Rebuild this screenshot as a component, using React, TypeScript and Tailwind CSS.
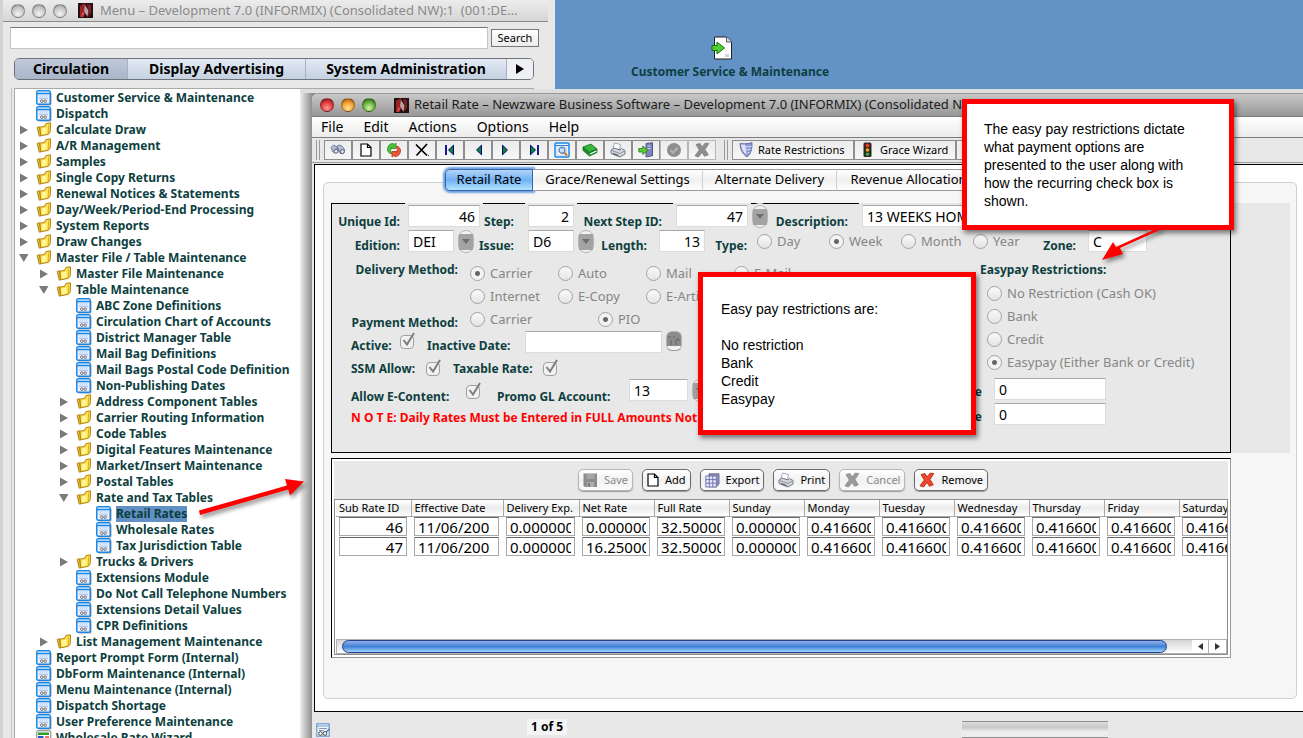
import React from "react";

type TreeNode = {
  label: string;
  depth: number;
  kind: "form" | "closed" | "open" | "wizard";
  selected?: boolean;
};

const treeNodes: TreeNode[] = [
  { label: "Customer Service & Maintenance", depth: 0, kind: "form" },
  { label: "Dispatch", depth: 0, kind: "form" },
  { label: "Calculate Draw", depth: 0, kind: "closed" },
  { label: "A/R Management", depth: 0, kind: "closed" },
  { label: "Samples", depth: 0, kind: "closed" },
  { label: "Single Copy Returns", depth: 0, kind: "closed" },
  { label: "Renewal Notices & Statements", depth: 0, kind: "closed" },
  { label: "Day/Week/Period-End Processing", depth: 0, kind: "closed" },
  { label: "System Reports", depth: 0, kind: "closed" },
  { label: "Draw Changes", depth: 0, kind: "closed" },
  { label: "Master File / Table Maintenance", depth: 0, kind: "open" },
  { label: "Master File Maintenance", depth: 1, kind: "closed" },
  { label: "Table Maintenance", depth: 1, kind: "open" },
  { label: "ABC Zone Definitions", depth: 2, kind: "form" },
  { label: "Circulation Chart of Accounts", depth: 2, kind: "form" },
  { label: "District Manager Table", depth: 2, kind: "form" },
  { label: "Mail Bag Definitions", depth: 2, kind: "form" },
  { label: "Mail Bags Postal Code Definition", depth: 2, kind: "form" },
  { label: "Non-Publishing Dates", depth: 2, kind: "form" },
  { label: "Address Component Tables", depth: 2, kind: "closed" },
  { label: "Carrier Routing Information", depth: 2, kind: "closed" },
  { label: "Code Tables", depth: 2, kind: "closed" },
  { label: "Digital Features Maintenance", depth: 2, kind: "closed" },
  { label: "Market/Insert Maintenance", depth: 2, kind: "closed" },
  { label: "Postal Tables", depth: 2, kind: "closed" },
  { label: "Rate and Tax Tables", depth: 2, kind: "open" },
  { label: "Retail Rates", depth: 3, kind: "form", selected: true },
  { label: "Wholesale Rates", depth: 3, kind: "form" },
  { label: "Tax Jurisdiction Table", depth: 3, kind: "form" },
  { label: "Trucks & Drivers", depth: 2, kind: "closed" },
  { label: "Extensions Module", depth: 2, kind: "form" },
  { label: "Do Not Call Telephone Numbers", depth: 2, kind: "form" },
  { label: "Extensions Detail Values", depth: 2, kind: "form" },
  { label: "CPR Definitions", depth: 2, kind: "form" },
  { label: "List Management Maintenance", depth: 1, kind: "closed" },
  { label: "Report Prompt Form (Internal)", depth: 0, kind: "form" },
  { label: "DbForm Maintenance (Internal)", depth: 0, kind: "form" },
  { label: "Menu Maintenance (Internal)", depth: 0, kind: "form" },
  { label: "Dispatch Shortage", depth: 0, kind: "form" },
  { label: "User Preference Maintenance", depth: 0, kind: "form" },
  { label: "Wholesale Rate Wizard", depth: 0, kind: "wizard" },
];

const indents = ["pl-1", "pl-6", "pl-11", "pl-16"];

const columns = [
  { name: "Sub Rate ID", width: "w-[75px]" },
  { name: "Effective Date", width: "w-[92px]" },
  { name: "Delivery Exp.", width: "w-[76px]" },
  { name: "Net Rate", width: "w-[75px]" },
  { name: "Full Rate", width: "w-[75px]" },
  { name: "Sunday", width: "w-[75px]" },
  { name: "Monday", width: "w-[75px]" },
  { name: "Tuesday", width: "w-[75px]" },
  { name: "Wednesday", width: "w-[75px]" },
  { name: "Thursday", width: "w-[75px]" },
  { name: "Friday", width: "w-[75px]" },
  { name: "Saturday", width: "w-[75px]" },
];

const day = "0.41660000";
const rates = [
  ["46", "11/06/200", "0.00000000", "0.00000000", "32.5000000", "0.00000000", day, day, day, day, day, day],
  ["47", "11/06/200", "0.00000000", "16.2500000", "32.5000000", "0.00000000", day, day, day, day, day, day],
];

/* ---------- icons ---------- */

function FormIcon() {
  return (
    <svg width="16" height="16" viewBox="0 0 16 16" className="shrink-0">
      <rect x="2" y="2" width="13.5" height="13.5" rx="1.5" fill="#9a9a9a" />
      <rect x="0.8" y="0.8" width="13.4" height="13.4" rx="1.5" fill="#eef0fb" stroke="#1a86e8" strokeWidth="1.5" />
      <path d="M1 3.6h13" stroke="#1a86e8" strokeWidth="1.4" />
      <path d="M1.5 2.2h12" stroke="#8fd0ff" strokeWidth="1" />
      <rect x="3" y="5" width="9" height="3.6" fill="#cfe3fb" />
      <path d="M3 8.8h9" stroke="#a9b4d8" strokeWidth="0.8" />
      <circle cx="5.8" cy="11.2" r="1.3" fill="none" stroke="#666" strokeWidth="0.9" />
      <circle cx="9.2" cy="11.2" r="1.3" fill="none" stroke="#666" strokeWidth="0.9" />
    </svg>
  );
}

function FolderIcon() {
  return (
    <svg width="16" height="16" viewBox="0 0 16 16" className="shrink-0">
      <path d="M1.2 5.4l2.2-.7 1.4 9.2-1.6.2z" fill="#f3c93a" stroke="#a87a0c" strokeWidth="0.9" />
      <path d="M4 5.200l4.800-.9 1.200-2.800 4.600-.7-.4 8.900-1.700 2.600-8 1.500z" fill="#ffe14d" stroke="#b0820e" strokeWidth="1" />
      <path d="M5.500 6.500l5-1 .1 5.500-4.500 1.500z" fill="#fff59a" />
      <path d="M12.600 2.500l-.2 8.500" stroke="#e3b226" strokeWidth="1" />
    </svg>
  );
}

function WizardIcon() {
  return (
    <svg width="16" height="16" viewBox="0 0 16 16" className="shrink-0">
      <rect x="0.8" y="0.8" width="14" height="14" rx="1" fill="#fff" stroke="#777" />
      <rect x="2" y="2.5" width="11" height="2.5" fill="#2aa12a" />
      <rect x="2" y="6" width="5.5" height="5" fill="#2558c9" />
      <path d="M9 7h4" stroke="#e33" strokeWidth="1.4" />
      <path d="M9 10h4" stroke="#e9b020" strokeWidth="1.4" />
    </svg>
  );
}

function AppLogo() {
  return (
    <svg width="15" height="15" viewBox="0 0 15 15" className="shrink-0">
      <rect width="15" height="15" fill="#241012" />
      <path d="M2 3l5-3 1 8-4 6H2z" fill="#9c2228" />
      <path d="M7 2l3.500 5.500L9.500 14 6 8z" fill="#b9a3a3" />
      <path d="M9 1l4 1v8l-3.500 4 1-6.500z" fill="#7c2125" />
      <path d="M4 9l3 1-2 4H3z" fill="#d8473f" />
    </svg>
  );
}

function BinocularsIcon() {
  return (
    <svg width="16" height="14" viewBox="0 0 16 14">
      <g stroke="#6a7490" strokeWidth="0.9" fill="#b4bdd4">
        <path d="M1 4.500L3.500 2l3 1.500 2 4.500-2.500 2-3-1z" />
        <path d="M7 3l2.500-1L12 3.200l2.800 3.600-1.500 3.400-3 .3z" />
        <circle cx="6" cy="8.200" r="2" fill="#dfe5f3" stroke="#4a5470" />
        <circle cx="12.400" cy="8.600" r="2" fill="#dfe5f3" stroke="#4a5470" />
      </g>
    </svg>
  );
}

function PageIcon() {
  return (
    <svg width="12" height="14" viewBox="0 0 12 14">
      <path d="M1 1h6.5L11 4.5V13H1z" fill="#fff" stroke="#000" strokeWidth="1.2" />
      <path d="M7.5 1v3.5H11" fill="none" stroke="#000" strokeWidth="1.2" />
    </svg>
  );
}

function RefreshIcon() {
  return (
    <svg width="16" height="16" viewBox="0 0 16 16">
      <path d="M5 12C1 10.500.5 6 3 3.200 4.500 1.500 7 1 8.500 2.200L10 1v5.500H4.800L6.300 5C4.500 5.500 4 9 5.800 11z" fill="#4cc23c" stroke="#2c8d22" strokeWidth="0.8" />
      <path d="M11 4c4 1.500 4.500 6 2 8.800-1.500 1.700-4 2.200-5.500 1L6 15V9.500h5.200L9.700 11C11.500 10.500 12 7 10.200 5z" fill="#f0593a" stroke="#b8341a" strokeWidth="0.8" />
    </svg>
  );
}

function DeleteIcon() {
  return (
    <svg width="14" height="14" viewBox="0 0 14 14">
      <path d="M1 1.500l11 11M12 1L1.500 12.500" stroke="#000" strokeWidth="1.700" />
      <path d="M13 12.500h.8" stroke="#000" />
    </svg>
  );
}

function NavIcon({ dir, bar }: { dir: "left" | "right"; bar?: boolean }) {
  return (
    <svg width="12" height="12" viewBox="0 0 12 12" className={dir === "right" ? "rotate-180" : ""}>
      {bar && <path d="M2 1v10" stroke="#00008b" strokeWidth="1.800" />}
      <path d="M9.500 1.200v9.600L4.500 6z" fill="#0a8a1e" stroke="#00008b" strokeWidth="1" />
    </svg>
  );
}

function FindIcon() {
  return (
    <svg width="16" height="16" viewBox="0 0 16 16">
      <rect x="1" y="1" width="14" height="14" rx="1" fill="#eef4fd" stroke="#1e86e6" strokeWidth="1.500" />
      <path d="M1 3.500h14" stroke="#1e86e6" />
      <rect x="3" y="5" width="9.500" height="8" fill="#fff" stroke="#b9c8de" strokeWidth="0.7" />
      <circle cx="8" cy="8.300" r="3" fill="#bfe0fb" stroke="#5b7ba8" strokeWidth="1.200" />
      <path d="M10.200 10.500l3 3" stroke="#c87a28" strokeWidth="1.800" />
    </svg>
  );
}

function BookIcon() {
  return (
    <svg width="16" height="14" viewBox="0 0 16 14">
      <path d="M1 4l8-3 6 5-7.500 3.500z" fill="#35b83c" stroke="#136d1a" strokeWidth="0.8" />
      <path d="M1 4v3.500l6.500 5.500 7.500-3.500V6L7.500 9.500z" fill="#1e8f28" stroke="#136d1a" strokeWidth="0.8" />
      <path d="M8 11l6.500-3" stroke="#fff" strokeWidth="1.200" />
    </svg>
  );
}

function PrinterIcon() {
  return (
    <svg width="16" height="16" viewBox="0 0 16 16">
      <path d="M3 6.500L4.500 1l6 1.500L9.500 8z" fill="#fdfdff" stroke="#8a93a8" strokeWidth="0.8" />
      <path d="M1 8l3-2 6 2 1.500-1.500L15 8.500v3.500l-5 3-9-3.500z" fill="#d3d6dc" stroke="#6a6f7c" strokeWidth="0.9" />
      <path d="M1.500 8.500l8.500 3 4.500-2.500" fill="none" stroke="#8f95a0" />
      <path d="M3 11.500l5.500 2" stroke="#555" strokeWidth="1.200" />
    </svg>
  );
}

function ExitIcon() {
  return (
    <svg width="16" height="16" viewBox="0 0 16 16">
      <path d="M8 1.500l6.500-.8v13L8 15z" fill="#7d85b8" stroke="#454c7c" strokeWidth="0.9" />
      <path d="M9.500 4h3M9.500 6.500h3" stroke="#c9cef0" />
      <path d="M.8 6.500h4V4l5 4.300-5 4.200V10h-4z" fill="#58cf38" stroke="#1c7d10" strokeWidth="0.8" />
    </svg>
  );
}

function CheckCircleIcon() {
  return (
    <svg width="16" height="16" viewBox="0 0 16 16">
      <circle cx="8" cy="8" r="7" fill="#8e8e8e" />
      <path d="M4.500 8.200l2.600 2.600 4.600-5.300" fill="none" stroke="#b4b4b4" strokeWidth="2" />
    </svg>
  );
}

function CrossIcon({ color, edge }: { color: string; edge: string }) {
  return (
    <svg width="16" height="16" viewBox="0 0 16 16">
      <path
        d="M2 2.500L6 1.500 8 5l3-3.800 3.800.3-3.800 6 3.300 5.300-3.800 1.500L8 10.500 4.500 15 1 13.800 5.300 8z"
        fill={color}
        stroke={edge}
        strokeWidth="0.8"
        strokeLinejoin="round"
      />
    </svg>
  );
}

function ShieldIcon() {
  return (
    <svg width="14" height="16" viewBox="0 0 14 16">
      <path d="M1 1.500c4 .6 8 .4 12-.8 0 7-1 11-5 14.300C3.500 12 1.500 8 1 1.500z" fill="#8f99d2" stroke="#5f679f" strokeWidth="0.9" />
      <path d="M2 2.500l4.500.2.700 10C4 10 2.500 7 2 2.500z" fill="#dfe3fa" />
      <path d="M7 5l5.500-.6M7 8l4.500-.6M7.500 11l3-.6" stroke="#d5daf5" />
    </svg>
  );
}

function TrafficIcon() {
  return (
    <svg width="9" height="16" viewBox="0 0 9 16">
      <rect x="0.500" y="0.500" width="8" height="14.500" rx="1.500" fill="#2c2620" />
      <circle cx="4.500" cy="3.500" r="2" fill="#e8391c" />
      <circle cx="4.500" cy="8" r="1.800" fill="#e6b21e" />
      <circle cx="4.500" cy="12.200" r="1.800" fill="#2fb53a" />
    </svg>
  );
}

function DiskIcon() {
  return (
    <svg width="15" height="15" viewBox="0 0 15 15">
      <path d="M0.500.500h13.500v13.500H2L.500 12.500z" fill="#8c8c8c" />
      <rect x="3.500" y="1" width="8" height="5" fill="#a5a5a5" />
      <rect x="4" y="9" width="7" height="5" fill="#adadad" />
      <rect x="5" y="10" width="2" height="3.500" fill="#777" />
    </svg>
  );
}

function GridIcon() {
  return (
    <svg width="15" height="15" viewBox="0 0 15 15">
      <path d="M4 .8h10v10l-2.500 3H4z" fill="#8f92b8" stroke="#585c86" strokeWidth="0.8" />
      <rect x="0.800" y="3" width="10.500" height="11" fill="#e6e7ff" stroke="#6a6ea8" strokeWidth="0.9" />
      <path d="M1 6.600h10M1 10.200h10M4.300 3v11M7.800 3v11" stroke="#6a6ea8" strokeWidth="0.9" />
    </svg>
  );
}

function DesktopIcon() {
  return (
    <svg width="22" height="24" viewBox="0 0 22 24">
      <path d="M3.500 1h12l5 5v17h-17z" fill="#fff" stroke="#222" strokeWidth="1" />
      <path d="M15.500 1v5h5" fill="#ddd" stroke="#444" strokeWidth="0.9" />
      <path d="M14 18h4v3h-4z" fill="#c9d4e8" />
      <path d="M1 9.500h5V6l7.500 6L6 18v-3.500H1z" fill="#4fca2f" stroke="#17700c" strokeWidth="1" />
    </svg>
  );
}

function StatusIcon() {
  return (
    <svg width="15" height="15" viewBox="0 0 15 15">
      <rect x="0.800" y="0.800" width="12.400" height="12.400" fill="#f2f5fc" stroke="#6a9bd0" strokeWidth="1.200" />
      <path d="M1 3h12" stroke="#6a9bd0" />
      <path d="M3 5.500h8M3 7.500h5" stroke="#8a96b4" />
      <circle cx="4.500" cy="10.500" r="1.800" fill="#fff" stroke="#444" />
      <circle cx="9" cy="10.500" r="1.800" fill="#fff" stroke="#444" />
      <path d="M10 9l3.500-3" stroke="#3d6fae" strokeWidth="1.200" />
    </svg>
  );
}

/* ---------- controls ---------- */

const lights = {
  gray: "bg-[radial-gradient(circle_at_50%_75%,#f4f4f4,#c4c4c4_60%,#8c8c8c)]",
  red: "bg-[radial-gradient(circle_at_50%_75%,#ff9a8f,#e0363c_55%,#6d1418)]",
  yellow: "bg-[radial-gradient(circle_at_50%_75%,#ffe89a,#f0992c_55%,#7d4a10)]",
  green: "bg-[radial-gradient(circle_at_50%_75%,#d2f5a0,#64ad3c_55%,#22501a)]",
};

function Light({ tone, name }: { tone: keyof typeof lights; name: string }) {
  return (
    <button
      aria-label={name}
      className={`size-[14px] shrink-0 rounded-full border border-black/30 ${lights[tone]}`}
    ></button>
  );
}

function Label({ htmlFor, className = "", children }: { htmlFor?: string; className?: string; children: React.ReactNode }) {
  return (
    <label
      htmlFor={htmlFor}
      className={`shrink-0 self-end whitespace-nowrap text-xs leading-4 font-bold text-[#0e3f3f] ${className}`}
    >
      {children}
    </label>
  );
}

function Field({ id, value, className = "" }: { id: string; value: string; className?: string }) {
  return (
    <input
      id={id}
      defaultValue={value}
      className={`h-[22px] shrink-0 self-start border border-[#dcdcdc] border-t-[#a8a8a8] bg-white px-1 text-sm leading-5 text-black outline-none ${className}`}
    />
  );
}

function LookupButton({ name, className = "" }: { name: string; className?: string }) {
  return (
    <button
      type="button"
      aria-label={name}
      className={`flex h-[23px] w-4 shrink-0 items-center self-start rounded-lg border border-[#b5b5b5] bg-[#f2f2f2] ${className}`}
    >
      <span className="flex h-4 w-full items-center justify-center bg-[#a3a3a3]">
        <svg width="8" height="5" viewBox="0 0 8 5">
          <path d="M0 0h8L4 5z" fill="#6e6e6e" />
        </svg>
      </span>
    </button>
  );
}

function Radio({ group, text, checked, className = "" }: { group: string; text: string; checked?: boolean; className?: string }) {
  return (
    <label className={`flex h-[23px] shrink-0 items-center gap-[5px] text-[13px] whitespace-nowrap text-[#868686] ${className}`}>
      <input
        type="radio"
        name={group}
        defaultChecked={checked}
        disabled
        className="size-[15px] shrink-0 appearance-none rounded-full border border-[#a2a2a2] bg-[#f1f1f1] bg-linear-to-b from-[#fafafa] to-[#e4e4e4] checked:bg-[radial-gradient(circle,#666_2px,#f3f3f3_3px)]"
      />
      {text}
    </label>
  );
}

function Check({ id, className = "" }: { id: string; className?: string }) {
  return (
    <span className={`relative size-[15px] shrink-0 ${className}`}>
      <input
        id={id}
        type="checkbox"
        defaultChecked
        disabled
        className="block size-[14px] appearance-none rounded-sm border border-[#a0a0a0] bg-[#f1f1f1]"
      />
      <svg width="14" height="15" viewBox="0 0 14 15" className="absolute -top-[3px] left-px">
        <path d="M2.500 8l3.500 4.500L13 1" fill="none" stroke="#7d7d7d" strokeWidth="2" />
      </svg>
    </span>
  );
}

function ToolButton({ name, disabled, children }: { name: string; disabled?: boolean; children: React.ReactNode }) {
  return (
    <button
      aria-label={name}
      disabled={disabled}
      className="flex h-5 w-7 shrink-0 items-center justify-center border border-[#8e8e8e] bg-linear-to-b from-[#ececec] to-[#f6f6f6] disabled:border-[#b8b8b8]"
    >
      {children}
    </button>
  );
}

function ActionButton({ text, disabled, children }: { text: string; disabled?: boolean; children: React.ReactNode }) {
  return (
    <button
      type="button"
      disabled={disabled}
      className="flex h-[22px] items-center gap-1.5 rounded-[5px] border border-[#6b6b6b] bg-linear-to-b from-white via-[#f1f1f1] to-[#fafafa] px-1 text-[11px] text-black shadow-[0_1px_1px_#999] disabled:border-[#b5b5b5] disabled:text-[#8a8a8a]"
    >
      {children}
      {text}
    </button>
  );
}

function Handle() {
  return <span className="h-5 w-1 shrink-0 border-x border-[#9a9a9a]"></span>;
}

/* ---------- windows ---------- */

function TreeRow({ node }: { node: TreeNode }) {
  const folder = node.kind === "closed" || node.kind === "open";
  return (
    <li className={`flex h-4 items-center whitespace-nowrap ${indents[node.depth]}`}>
      <span className="flex w-[17px] shrink-0 items-center">
        {node.kind === "closed" && (
          <svg width="9" height="10" viewBox="0 0 9 10">
            <path d="M1 .500v9L9 5z" fill="#7b7b7b" />
          </svg>
        )}
        {node.kind === "open" && (
          <svg width="10" height="8" viewBox="0 0 10 8">
            <path d="M0 0h9.500L4.800 8z" fill="#7b7b7b" />
          </svg>
        )}
      </span>
      {node.kind === "form" && <FormIcon />}
      {node.kind === "wizard" && <WizardIcon />}
      {folder && <FolderIcon />}
      <span
        className={`ml-1 text-xs leading-4 font-bold text-[#0e3f3f] ${node.selected ? "bg-[#6290c5]" : ""}`}
      >
        {node.label}
      </span>
    </li>
  );
}

function MenuWindow() {
  return (
    <section className="absolute inset-y-0 left-0 flex w-[555px] flex-col overflow-hidden border-l-[3px] border-[#d2d2d2] bg-[#e8e8e8] pr-[7px]">
      <header className="flex h-[22px] shrink-0 items-center gap-[7px] border-b border-[#8b8b8b] bg-linear-to-b from-[#ececec] to-[#d6d6d6] pl-2">
        <Light tone="gray" name="Close menu" />
        <Light tone="gray" name="Minimize menu" />
        <Light tone="gray" name="Zoom menu" />
        <span className="ml-1">
          <AppLogo />
        </span>
        <h1 className="min-w-0 flex-1 truncate text-[13px] whitespace-pre text-[#8a8a8a]">
          Menu – Development 7.0 (INFORMIX) (Consolidated NW):1  (001:DE…
        </h1>
      </header>

      <div className="flex shrink-0 items-center gap-[3px] pt-[5px] pr-[9px] pl-[7px]">
        <input
          aria-label="Search menu"
          className="h-[22px] min-w-0 flex-1 border border-[#c4c4c4] border-t-[#777] bg-white px-1 text-[13px] outline-none"
        />
        <button className="h-[18px] w-12 border border-[#777] bg-linear-to-b from-white to-[#ececec] text-[11px] leading-4 text-black">
          Search
        </button>
      </div>

      <nav className="mt-[9px] mr-3.5 ml-[11px] flex h-[22px] shrink-0 overflow-hidden rounded-[5px] border border-[#6f747c] bg-linear-to-b from-[#e3eaf4] to-[#c5d1e1] text-sm font-bold text-black">
        <button className="w-[113px] border-r border-[#a6b0bf] bg-linear-to-b from-[#bfc9d8] to-[#a9b6c8]">Circulation</button>
        <button className="w-[178px] border-r border-[#a6b0bf]">Display Advertising</button>
        <button className="w-[201px] border-r border-[#a6b0bf]">System Administration</button>
        <button aria-label="More tabs" className="flex flex-1 items-center justify-center bg-[#eef0f3]">
          <svg width="8" height="10" viewBox="0 0 8 10">
            <path d="M0 0v10l8-5z" fill="#000" />
          </svg>
        </button>
      </nav>

      <div className="mt-2 mr-3.5 ml-2 flex min-h-0 flex-1 border-l border-[#c4c4c4] pl-[2px]">
        <ul className="min-w-0 flex-1 overflow-hidden border-t border-l border-[#a9a9a9] bg-white pt-px">
          {treeNodes.map((node) => (
            <TreeRow key={node.label} node={node} />
          ))}
        </ul>
      </div>
    </section>
  );
}

function RateForm() {
  return (
    <form className="mr-[59px] border border-black bg-[#e8e8e8]">
      {/* the first row's fields interrupt the frame's top line */}
      <div className="-mt-px flex h-[27px] pt-0.5">
        <Label htmlFor="uniqueId" className="w-[68px] text-right">Unique Id:</Label>
        <Field id="uniqueId" value="46" className="ml-2 w-[72px] text-right shadow-[0_1px_0_3px_#e8e8e8]" />
        <Label htmlFor="step" className="w-[34px] text-right">Step:</Label>
        <Field id="step" value="2" className="ml-3.5 w-[46px] text-right shadow-[0_1px_0_3px_#e8e8e8]" />
        <Label htmlFor="nextStep" className="w-[88px] text-right">Next Step ID:</Label>
        <Field id="nextStep" value="47" className="ml-3.5 w-[72px] text-right shadow-[0_1px_0_3px_#e8e8e8]" />
        <LookupButton name="Look up next step" className="ml-1 shadow-[0_1px_0_3px_#e8e8e8]" />
        <Label htmlFor="description" className="w-[80px] text-right">Description:</Label>
        <Field id="description" value="13 WEEKS HOME DELIVERY" className="ml-3.5 w-[240px] shadow-[0_1px_0_3px_#e8e8e8]" />
      </div>

      <div className="flex h-6">
        <Label htmlFor="edition" className="w-[68px] text-right">Edition:</Label>
        <Field id="edition" value="DEI" className="ml-2 w-[46px]" />
        <LookupButton name="Look up edition" className="ml-1" />
        <Label htmlFor="issue" className="w-10 text-right">Issue:</Label>
        <Field id="issue" value="D6" className="ml-3.5 w-[46px]" />
        <LookupButton name="Look up issue" className="ml-1" />
        <Label htmlFor="length" className="w-[53px] text-right">Length:</Label>
        <Field id="length" value="13" className="ml-3 w-[46px] text-right" />
        <Label className="w-[42px] text-right">Type:</Label>
        <Radio group="type" text="Day" className="ml-2.5 w-[72px]" />
        <Radio group="type" text="Week" checked className="w-[72px]" />
        <Radio group="type" text="Month" className="w-[72px]" />
        <Radio group="type" text="Year" className="w-[57px]" />
        <Label htmlFor="zone" className="w-[46px] text-right">Zone:</Label>
        <Field id="zone" value="C" className="ml-3 w-[59px]" />
      </div>

      <div className="flex pt-2 pb-[26px]">
        <div className="w-[648px] shrink-0 pl-[19px]">
          <div className="flex">
            <span className="w-[107px] shrink-0 text-right text-xs leading-4 font-bold text-[#0e3f3f]">Delivery Method:</span>
            <div className="ml-3 grid grid-cols-[88px_88px_88px_88px]">
              <Radio group="delivery" text="Carrier" checked />
              <Radio group="delivery" text="Auto" />
              <Radio group="delivery" text="Mail" />
              <Radio group="delivery" text="E-Mail" />
              <Radio group="delivery" text="Internet" />
              <Radio group="delivery" text="E-Copy" />
              <Radio group="delivery" text="E-Article" />
            </div>
          </div>
          <div className="flex">
            <Label className="w-[107px] text-right">Payment Method:</Label>
            <Radio group="payment" text="Carrier" className="ml-3 w-32" />
            <Radio group="payment" text="PIO" checked />
          </div>
          <div className="flex h-[23px]">
            <Label htmlFor="active" className="w-[41px]">Active:</Label>
            <Check id="active" className="ml-2 self-center" />
            <Label htmlFor="inactiveDate" className="ml-3 w-[84px]">Inactive Date:</Label>
            <Field id="inactiveDate" value="" className="ml-3.5 w-[137px]" />
            <button
              type="button"
              aria-label="Pick inactive date"
              className="ml-1 h-5 w-4 shrink-0 rounded-md border border-[#b5b5b5] border-b-[#999] bg-linear-to-b from-[#8c8c8c] from-75% to-[#f2f2f2] to-80%"
            >
              <svg width="14" height="13" viewBox="0 0 14 13">
                <path d="M1 2h3M6 2h2M4 5v5M9 10V6l2-2 1.500 2" fill="none" stroke="#696969" strokeWidth="1.200" />
              </svg>
            </button>
          </div>
          <div className="flex h-[25px] pb-0.5">
            <Label htmlFor="ssm" className="w-[67px]">SSM Allow:</Label>
            <Check id="ssm" className="ml-2 self-end" />
            <Label htmlFor="taxable" className="ml-3 w-[82px]">Taxable Rate:</Label>
            <Check id="taxable" className="ml-2 self-end" />
          </div>
          <div className="flex h-[26px]">
            <Label htmlFor="econtent" className="w-[107px]">Allow E-Content:</Label>
            <Check id="econtent" className="ml-2 self-center" />
            <Label htmlFor="promo" className="ml-4 w-[118px]">Promo GL Account:</Label>
            <Field id="promo" value="13" className="ml-3.5 w-[59px]" />
            <LookupButton name="Look up promo account" className="ml-1" />
          </div>
          <p className="mt-[5px] text-xs leading-4 font-bold whitespace-nowrap text-[#ff0000]">
            N O T E: Daily Rates Must be Entered in FULL Amounts Not
          </p>
        </div>

        <div className="min-w-0 flex-1">
          <p className="mb-1 text-xs leading-4 font-bold text-[#0e3f3f]">Easypay Restrictions:</p>
          <div className="flex flex-col pl-[7px]">
            <Radio group="easypay" text="No Restriction (Cash OK)" />
            <Radio group="easypay" text="Bank" />
            <Radio group="easypay" text="Credit" />
            <Radio group="easypay" text="Easypay (Either Bank or Credit)" checked />
          </div>
          <div className="-ml-10 flex flex-col gap-[3px] pt-1">
            <div className="flex">
              <Label htmlFor="rateOne" className="w-[42px] text-right">Rate</Label>
              <Field id="rateOne" value="0" className="ml-3 w-28" />
            </div>
            <div className="flex">
              <Label htmlFor="rateTwo" className="w-[42px] text-right">Rate</Label>
              <Field id="rateTwo" value="0" className="ml-3 w-28" />
            </div>
          </div>
        </div>
      </div>
    </form>
  );
}

function SubRates() {
  return (
    <div className="mt-[5px] mr-[59px] flex h-[200px] flex-col border border-[#9a9a9a] border-t-black border-l-black bg-white p-0.5">
      <div className="flex h-[38px] shrink-0 items-center justify-center gap-[9px] bg-[#e8e8e8] pl-1">
        <ActionButton text="Save" disabled><DiskIcon /></ActionButton>
        <ActionButton text="Add"><PageIcon /></ActionButton>
        <ActionButton text="Export"><GridIcon /></ActionButton>
        <ActionButton text="Print"><PrinterIcon /></ActionButton>
        <ActionButton text="Cancel" disabled><CrossIcon color="#9a9a9a" edge="#888" /></ActionButton>
        <ActionButton text="Remove"><CrossIcon color="#f0472a" edge="#a8200c" /></ActionButton>
      </div>

      <div className="flex min-h-0 flex-1 flex-col border border-[#8e8e8e] pl-px">
        <div className="min-h-0 flex-1 overflow-hidden">
          <table className="w-[918px] table-fixed border-collapse">
            <thead>
              <tr>
                {columns.map((col) => (
                  <th
                    key={col.name}
                    className={`h-4 border-r border-b border-[#a8a8a8] bg-linear-to-b from-white via-[#ececec] to-white p-0 pl-[3px] text-left text-[11px] leading-4 font-normal whitespace-nowrap text-black ${col.width}`}
                  >
                    {col.name}
                  </th>
                ))}
              </tr>
            </thead>
            <tbody>
              {rates.map((row) => (
                <tr key={row[0]}>
                  {row.map((value, i) => (
                    <td key={columns[i].name} className="h-5 p-0 pr-1 pl-[3px]">
                      <input
                        aria-label={`${columns[i].name} ${row[0]}`}
                        defaultValue={value}
                        className={`block h-[19px] w-full border border-[#a8a8a8] border-t-[#666] bg-white px-[3px] text-[15px] leading-4 text-black outline-none ${i === 0 ? "text-right" : ""}`}
                      />
                    </td>
                  ))}
                </tr>
              ))}
            </tbody>
          </table>
        </div>
        <div className="flex h-[15px] shrink-0 items-stretch border border-[#b0b0b0] bg-linear-to-b from-[#d4d4d4] to-white pl-[5px]">
          <div className="flex-1">
            <div className="h-full w-[97%] rounded-full border border-[#24408f] bg-linear-to-b from-[#8fb0e4] via-[#3f80d8] to-[#9fd6fa]"></div>
          </div>
          <button aria-label="Scroll left" className="flex w-[17px] items-center justify-center border-r border-[#b0b0b0] bg-white">
            <svg width="5" height="7" viewBox="0 0 5 7"><path d="M5 0v7L0 3.500z" fill="#333" /></svg>
          </button>
          <button aria-label="Scroll right" className="flex w-[17px] items-center justify-center bg-white">
            <svg width="5" height="7" viewBox="0 0 5 7"><path d="M0 0v7l5-3.500z" fill="#333" /></svg>
          </button>
        </div>
      </div>
    </div>
  );
}

function RetailWindow() {
  return (
    <section className="absolute top-[89px] right-0 bottom-0 left-[300px] flex flex-col bg-linear-to-r from-[#efefef] to-[#8f8f8f] to-[12px]">
      <div className="h-1 shrink-0 bg-[#dedede]"></div>
      <div className="ml-3 flex min-h-0 flex-1 flex-col rounded-tl-md border-t border-[#999] bg-[#e8e8e8]">
        <header className="flex h-[22px] shrink-0 items-center gap-[7px] rounded-tl-md bg-linear-to-b from-[#c9c9c9] to-[#979797] pl-2">
          <Light tone="red" name="Close" />
          <Light tone="yellow" name="Minimize" />
          <Light tone="green" name="Zoom" />
          <span className="ml-[11px]">
            <AppLogo />
          </span>
          <h2 className="-ml-0.5 text-[13px] whitespace-nowrap text-[#1c1c1c]">
            Retail Rate – Newzware Business Software – Development 7.0 (INFORMIX) (Consolidated NW):1
          </h2>
        </header>

        <nav className="flex h-[22px] shrink-0 items-center gap-5 border-y border-[#7d7d7d] bg-linear-to-b from-white to-[#ececec] pl-[9px] text-sm text-black">
          <button>File</button>
          <button>Edit</button>
          <button>Actions</button>
          <button>Options</button>
          <button>Help</button>
        </nav>

        <div className="flex h-[25px] shrink-0 items-center border-b border-[#9a9a9a] pl-1">
          <Handle />
          <div className="ml-1 flex">
            <ToolButton name="Find"><BinocularsIcon /></ToolButton>
            <ToolButton name="New"><PageIcon /></ToolButton>
            <ToolButton name="Refresh"><RefreshIcon /></ToolButton>
            <ToolButton name="Delete"><DeleteIcon /></ToolButton>
            <ToolButton name="First"><NavIcon dir="left" bar /></ToolButton>
            <ToolButton name="Previous"><NavIcon dir="left" /></ToolButton>
            <ToolButton name="Next"><NavIcon dir="right" /></ToolButton>
            <ToolButton name="Last"><NavIcon dir="right" bar /></ToolButton>
            <ToolButton name="Browse"><FindIcon /></ToolButton>
            <ToolButton name="Manual"><BookIcon /></ToolButton>
            <ToolButton name="Print form"><PrinterIcon /></ToolButton>
            <ToolButton name="Exit"><ExitIcon /></ToolButton>
            <ToolButton name="Accept" disabled><CheckCircleIcon /></ToolButton>
            <ToolButton name="Discard" disabled><CrossIcon color="#8e8e8e" edge="#7c7c7c" /></ToolButton>
          </div>
          <span className="ml-2 flex">
            <Handle />
          </span>
          <button className="ml-1 flex h-5 w-[122px] shrink-0 items-center gap-[5px] border border-[#8e8e8e] bg-linear-to-b from-[#ececec] to-[#f6f6f6] pl-1.5 text-[11px] whitespace-nowrap text-black">
            <ShieldIcon />
            Rate Restrictions
          </button>
          <button className="flex h-5 w-[102px] shrink-0 items-center gap-2 border border-[#8e8e8e] bg-linear-to-b from-[#ececec] to-[#f6f6f6] pl-2 text-[11px] whitespace-nowrap text-black">
            <TrafficIcon />
            Grace Wizard
          </button>
          <button aria-label="More tools" className="h-5 w-[102px] border border-[#8e8e8e] bg-[#f1f1f1]"></button>
        </div>

        <main className="mt-px ml-0.5 flex min-h-0 flex-1 flex-col border-y border-l border-black bg-white pr-1.5 pl-2">
          <div className="relative mt-1 ml-[122px] flex h-[22px] shrink-0 text-[13px] text-black">
            <button className="h-[22px] w-[88px] rounded-l-[5px] border border-[#3a62a8] bg-linear-to-b from-[#b4d4f8] via-[#6fb0f4] to-[#b5e4ff] shadow-[0_0_2px_2px_#6ba0de]">
              Retail Rate
            </button>
            <button className="w-[170px] border-y border-r border-[#9a9a9a] border-r-[#cfcfcf] bg-linear-to-b from-white via-[#efefef] to-white">
              Grace/Renewal Settings
            </button>
            <button className="w-[134px] border-y border-r border-[#9a9a9a] border-r-[#cfcfcf] bg-linear-to-b from-white via-[#efefef] to-white">
              Alternate Delivery
            </button>
            <button className="w-[144px] border-y border-r border-[#9a9a9a] border-r-[#cfcfcf] bg-linear-to-b from-white via-[#efefef] to-white">
              Revenue Allocation
            </button>
          </div>
          <div className="-mt-[9px] mb-3 min-h-0 flex-1 rounded-[5px] border border-[#cfcfcf] bg-[#f6f6f6] pt-5 pr-1.5 pl-[7px]">
            <div className="bg-[#e8e8e8]">
              <RateForm />
            </div>
            <SubRates />
          </div>
        </main>

        <footer className="flex h-[26px] shrink-0 items-end">
          <span className="ml-1">
            <StatusIcon />
          </span>
          <span className="mb-[3px] ml-[196px] bg-[#f4f4f4] px-1 text-xs leading-4 font-bold text-black">1 of 5</span>
          <span className="mr-[195px] ml-auto h-[17px] w-[146px] border-y border-[#8e8e8e] bg-linear-to-b from-[#dedede] via-[#c8c8c8] via-35% to-[#ededed] to-65%"></span>
        </footer>
      </div>
    </section>
  );
}

function Callout({ className, children }: { className: string; children: React.ReactNode }) {
  return (
    <aside
      className={`absolute border-[5px] border-[#ff0000] bg-white font-['Liberation_Sans',Arial,sans-serif] text-sm leading-[18px] text-black shadow-[2px_3px_5px_rgba(0,0,0,0.5)] ${className}`}
    >
      {children}
    </aside>
  );
}

export default function App() {
  return (
    <div className="relative h-screen min-h-[738px] overflow-hidden bg-[#6392c7] font-['Noto_Sans','Open_Sans',sans-serif]">
      <a href="#customer-service" className="absolute top-9 left-[631px] flex flex-col items-center text-xs leading-4 font-bold text-[#0e3f3f]">
        <span className="mr-4">
          <DesktopIcon />
        </span>
        <span className="mt-1">Customer Service &amp; Maintenance</span>
      </a>

      <MenuWindow />
      <RetailWindow />

      <Callout className="top-[272px] left-[698px] h-[163px] w-[278px] pt-[23px] pl-[18px]">
        <p>Easy pay restrictions are:</p>
        <ul className="mt-[18px]">
          <li>No restriction</li>
          <li>Bank</li>
          <li>Credit</li>
          <li>Easypay</li>
        </ul>
      </Callout>
      <Callout className="top-[99px] left-[962px] h-[131px] w-[272px] pt-4 pr-8 pl-[17px]">
        The easy pay restrictions dictate what payment options are presented to the user along with how the recurring check box is shown.
      </Callout>

      <svg width="120" height="50" viewBox="0 0 120 50" className="absolute top-[472px] left-[194px] drop-shadow-[2px_3px_2px_rgba(0,0,0,0.45)]">
        <path d="M5 38.500L93 13.500 91 7l19 2.500-14 14-1.700-6L6 43z" fill="#ff0000" />
      </svg>
      <svg width="80" height="50" viewBox="0 0 80 50" className="absolute top-[222px] left-[1092px] drop-shadow-[2px_3px_2px_rgba(0,0,0,0.45)]">
        <path d="M70 7L28 26l3 6-21 6 11-18 3 5L68 5z" fill="#ff0000" />
      </svg>
    </div>
  );
}
